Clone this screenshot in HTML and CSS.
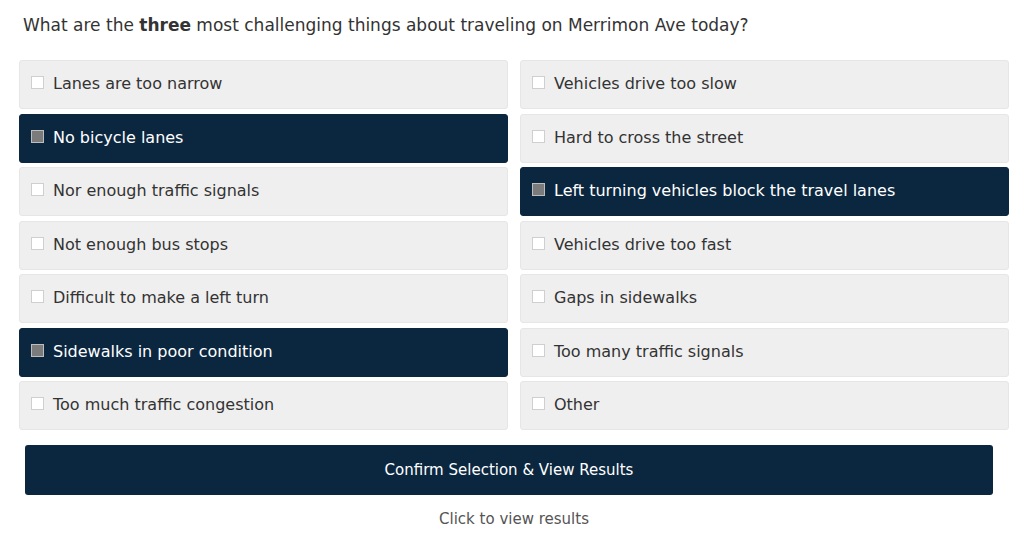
FILE: index.html
```html
<!DOCTYPE html>
<html>
<head>
<meta charset="utf-8">
<link rel="stylesheet" href="styles.css">
</head>
<body>
<div class="poll">
  <h1 class="question">What are the <strong>three</strong> most challenging things about traveling on Merrimon Ave today?</h1>
  <div class="options">
    <div class="option"><span class="box"></span>Lanes are too narrow</div>
    <div class="option"><span class="box"></span>Vehicles drive too slow</div>
    <div class="option selected"><span class="box"></span>No bicycle lanes</div>
    <div class="option"><span class="box"></span>Hard to cross the street</div>
    <div class="option"><span class="box"></span>Nor enough traffic signals</div>
    <div class="option selected"><span class="box"></span>Left turning vehicles block the travel lanes</div>
    <div class="option"><span class="box"></span>Not enough bus stops</div>
    <div class="option"><span class="box"></span>Vehicles drive too fast</div>
    <div class="option"><span class="box"></span>Difficult to make a left turn</div>
    <div class="option"><span class="box"></span>Gaps in sidewalks</div>
    <div class="option selected"><span class="box"></span>Sidewalks in poor condition</div>
    <div class="option"><span class="box"></span>Too many traffic signals</div>
    <div class="option"><span class="box"></span>Too much traffic congestion</div>
    <div class="option"><span class="box"></span>Other</div>
  </div>
  <div class="actions">
    <button class="confirm">Confirm Selection &amp; View Results</button>
    <div class="hint">Click to view results</div>
  </div>
</div>
</body>
</html>
```
FILE: styles.css
```css
html, body {
  margin: 0;
  padding: 0;
  background: #ffffff;
}
body {
  font-family: "DejaVu Sans", "Noto Sans", sans-serif;
  color: #333333;
}
.poll {
  padding: 13px 16px 0 19px;
}
.question {
  margin: 0 0 0 4px;
  font-size: 17px;
  font-weight: normal;
  line-height: 24px;
  color: #333;
}
.question strong {
  font-weight: bold;
}
.options {
  margin-top: 23px;
  display: grid;
  grid-template-columns: 489px 489px;
  grid-auto-rows: 49px;
  column-gap: 12px;
  row-gap: 4.5px;
}
.option {
  box-sizing: border-box;
  display: flex;
  align-items: center;
  background: #efefef;
  border: 1px solid #e6e6e6;
  border-radius: 3px;
  padding: 0 0 2px 11px;
  font-size: 16px;
  color: #333;
}
.option.selected {
  background: #0b2740;
  border-color: #0b2740;
  color: #ffffff;
}
.box {
  width: 13px;
  height: 13px;
  box-sizing: border-box;
  border: 1px solid #cfcfcf;
  background: #ffffff;
  margin-right: 9px;
  margin-bottom: 2px;
  flex: none;
}
.option.selected .box {
  background: #7b7b7b;
  border: 1px solid #bdbdbd;
}
.actions {
  padding: 15px 0 0 6px;
  width: 968px;
  text-align: center;
}
.confirm {
  display: block;
  width: 968px;
  height: 50px;
  background: #0b2740;
  color: #ffffff;
  border: none;
  border-radius: 3px;
  font-family: inherit;
  font-size: 15px;
  padding: 0;
}
.hint {
  margin-top: 15px;
  font-size: 15px;
  color: #555;
  padding-left: 10px;
}
```
